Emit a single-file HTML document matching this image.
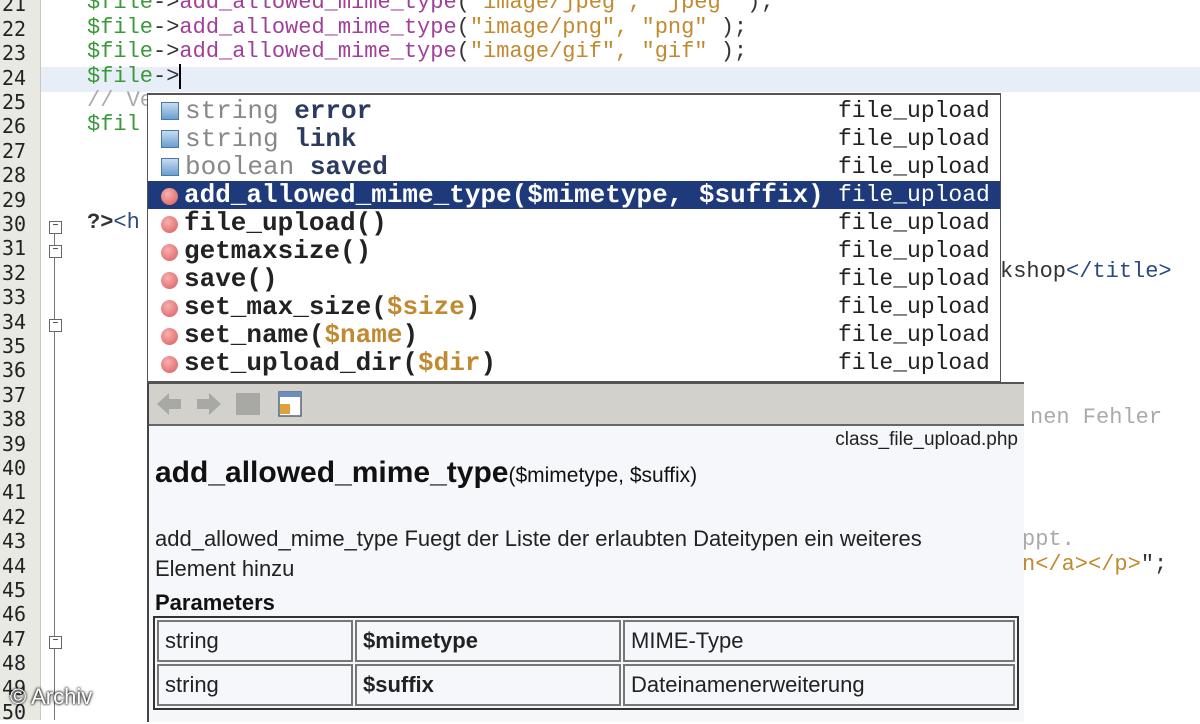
<!DOCTYPE html>
<html><head><meta charset="utf-8"><style>
body{margin:0;width:1200px;height:720px;overflow:hidden;background:#fff;position:relative;font-family:"Liberation Mono",monospace}
.g{position:absolute;left:0;top:0;width:40px;height:720px;background:#e9e9e4;border-right:1px solid #c8c8c0}
.n{position:absolute;left:2px;font-size:20px;color:#222;font-family:"DejaVu Sans Mono",monospace}
.c{position:absolute;left:87px;font-size:22px;white-space:pre;color:#333}
.v{color:#3a9a3a}.m{color:#a0409a}.s{color:#c08a30}.k{color:#2a4a80}.cm{color:#aaa}
.fold{position:absolute;left:49px;width:11px;height:11px;border:1px solid #666;background:#fff;font-size:10px;line-height:10px;text-align:center}
.pop{position:absolute;left:147px;top:93px;width:852px;height:286px;background:#fff;border:1px solid #555;border-top:2px solid #555}
.r{position:absolute;left:0;width:852px;height:28px;font-size:26px;line-height:28px;white-space:pre;font-weight:bold;color:#222}
.r .t{font-weight:normal;color:#888}
.r .cl{position:absolute;left:690px;font-weight:normal;font-size:23px;color:#222}
.r .a{color:#c08a30}
.sq{display:inline-block;width:16px;height:16px;background:linear-gradient(#c8dcf0,#6a9ed0);border:1px solid #4a78a8;margin:0 6px 0 13px;vertical-align:-2px}
.ci{display:inline-block;width:17px;height:17px;border-radius:50%;background:radial-gradient(circle at 40% 35%,#f8b0b0,#d85a5a);margin:0 6px 0 13px;vertical-align:-3px}
.sel{background:#1e3a7a;color:#fff}.sel .cl{color:#fff}
.doc{position:absolute;left:147px;top:382px;width:875px;height:338px;background:#f6f7fb;border-left:2px solid #444;border-top:2px solid #555;font-family:"Liberation Sans",sans-serif}
.tb{height:40px;background:#d2d1cb;border-bottom:2px solid #666}
</style></head><body>
<div style="position:absolute;left:41px;top:67px;width:1159px;height:25px;background:#e8eef7"></div>
<div class="g"></div>
<div style="position:absolute;left:54px;top:226px;width:1px;height:494px;background:#777"></div>
<div class="n" style="top:-8px">21</div><div class="n" style="top:17px">22</div><div class="n" style="top:41px">23</div><div class="n" style="top:66px">24</div><div class="n" style="top:90px">25</div><div class="n" style="top:114px">26</div><div class="n" style="top:139px">27</div><div class="n" style="top:163px">28</div><div class="n" style="top:188px">29</div><div class="n" style="top:212px">30</div><div class="n" style="top:236px">31</div><div class="n" style="top:261px">32</div><div class="n" style="top:285px">33</div><div class="n" style="top:310px">34</div><div class="n" style="top:334px">35</div><div class="n" style="top:358px">36</div><div class="n" style="top:383px">37</div><div class="n" style="top:407px">38</div><div class="n" style="top:432px">39</div><div class="n" style="top:456px">40</div><div class="n" style="top:480px">41</div><div class="n" style="top:505px">42</div><div class="n" style="top:529px">43</div><div class="n" style="top:554px">44</div><div class="n" style="top:578px">45</div><div class="n" style="top:602px">46</div><div class="n" style="top:627px">47</div><div class="n" style="top:651px">48</div><div class="n" style="top:676px">49</div><div class="n" style="top:700px">50</div>
<div class="fold" style="top:221px">−</div><div class="fold" style="top:245px">−</div><div class="fold" style="top:319px">−</div><div class="fold" style="top:636px">−</div>
<div class="c" style="top:-10px"><span class="v">$file</span>-&gt;<span class="m">add_allowed_mime_type</span>(<span class="s">"image/jpeg", "jpeg"</span> );</div>
<div class="c" style="top:15px"><span class="v">$file</span>-&gt;<span class="m">add_allowed_mime_type</span>(<span class="s">"image/png", "png"</span> );</div>
<div class="c" style="top:39px"><span class="v">$file</span>-&gt;<span class="m">add_allowed_mime_type</span>(<span class="s">"image/gif", "gif"</span> );</div>
<div class="c" style="top:64px"><span class="v">$file</span>-&gt;<span style="border-left:2px solid #000"></span></div>
<div class="c cm" style="top:88px">// Ve</div>
<div class="c v" style="top:112px">$fil</div>
<div class="c" style="top:210px;font-weight:bold">?&gt;<span class="k" style="font-weight:normal">&lt;h</span></div>
<div class="c" style="top:259px;left:1000px">kshop<span class="k">&lt;/title&gt;</span></div>
<div class="c cm" style="top:405px;left:1030px">nen Fehler</div>
<div class="c cm" style="top:527px;left:1022px">ppt.</div>
<div class="c s" style="top:552px;left:1022px">n&lt;/a&gt;&lt;/p&gt;<span style="color:#333">";</span></div>
<div class="pop">
<div class="r" style="top:2px"><span class="sq"></span><span class="t">string </span><span style="color:#2a3a60">error</span><span class="cl">file_upload</span></div>
<div class="r" style="top:30px"><span class="sq"></span><span class="t">string </span><span style="color:#2a3a60">link</span><span class="cl">file_upload</span></div>
<div class="r" style="top:58px"><span class="sq"></span><span class="t">boolean </span><span style="color:#2a3a60">saved</span><span class="cl">file_upload</span></div>
<div class="r sel" style="top:86px"><span class="ci"></span>add_allowed_mime_type($mimetype, $suffix)<span class="cl">file_upload</span></div>
<div class="r" style="top:114px"><span class="ci"></span>file_upload()<span class="cl">file_upload</span></div>
<div class="r" style="top:142px"><span class="ci"></span>getmaxsize()<span class="cl">file_upload</span></div>
<div class="r" style="top:170px"><span class="ci"></span>save()<span class="cl">file_upload</span></div>
<div class="r" style="top:198px"><span class="ci"></span>set_max_size(<span class="a">$size</span>)<span class="cl">file_upload</span></div>
<div class="r" style="top:226px"><span class="ci"></span>set_name(<span class="a">$name</span>)<span class="cl">file_upload</span></div>
<div class="r" style="top:254px"><span class="ci"></span>set_upload_dir(<span class="a">$dir</span>)<span class="cl">file_upload</span></div>
</div>
<div class="doc">
<div class="tb"><svg width="160" height="40">
<path d="M8 20 L20 9 V15 H32 V25 H20 V31 Z" fill="#a8a8a4"/>
<path d="M72 20 L60 9 V15 H48 V25 H60 V31 Z" fill="#a8a8a4"/>
<rect x="87" y="9" width="24" height="22" fill="#a8a8a4"/>
<rect x="130" y="8" width="22" height="24" fill="#fff" stroke="#567" stroke-width="1.5"/><rect x="130" y="8" width="22" height="5" fill="#6a8ec0"/>
<rect x="131" y="20" width="10" height="10" fill="#e0a040"/></svg></div>
<div style="position:absolute;right:6px;top:45px;font-size:19px;color:#222">class_file_upload.php</div>
<div style="position:absolute;left:6px;top:72px;font-size:30px;font-weight:bold;color:#111;white-space:nowrap">add_allowed_mime_type<span style="font-size:21px;font-weight:normal">($mimetype, $suffix)</span></div>
<div style="position:absolute;left:6px;top:140px;font-size:22px;line-height:30px;color:#222;width:845px">add_allowed_mime_type Fuegt der Liste der erlaubten Dateitypen ein weiteres Element hinzu</div>
<div style="position:absolute;left:6px;top:206px;font-size:22px;font-weight:bold;color:#111">Parameters</div>
<table style="position:absolute;left:4px;top:232px;width:866px;border:2px solid #333;border-collapse:separate;border-spacing:2px;font-size:22px;color:#222">
<tr style="height:42px"><td style="border:2px solid #777;width:185px;padding-left:6px">string</td><td style="border:2px solid #777;width:255px;padding-left:6px;font-weight:bold">$mimetype</td><td style="border:2px solid #777;padding-left:6px">MIME-Type</td></tr>
<tr style="height:42px"><td style="border:2px solid #777;padding-left:6px">string</td><td style="border:2px solid #777;padding-left:6px;font-weight:bold">$suffix</td><td style="border:2px solid #777;padding-left:6px">Dateinamenerweiterung</td></tr>
</table>
</div>
<div style="position:absolute;left:10px;top:684px;font-family:'Liberation Sans',sans-serif;font-size:22px;color:#fff;text-shadow:0 0 3px #000,0 0 2px #000">© Archiv</div>
</body></html>
